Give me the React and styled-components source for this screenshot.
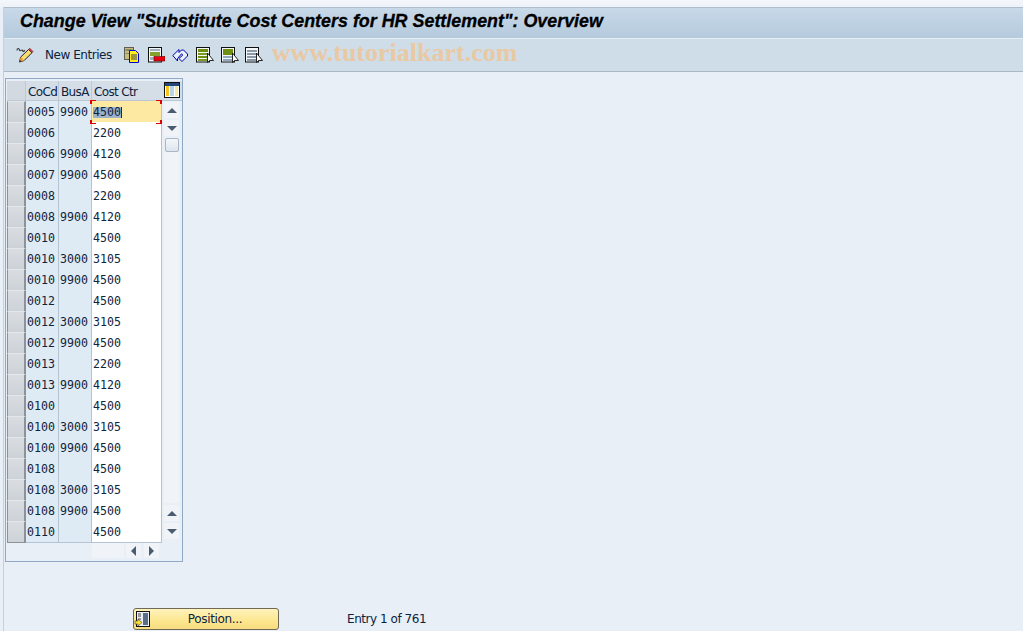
import React from "react";
import styled, { createGlobalStyle } from "styled-components";

const Global = createGlobalStyle`
  html, body { margin: 0; padding: 0; background: #e9eff7; }
  #root { width: 1023px; height: 631px; overflow: hidden; }
`;

const Page = styled.div`
  width: 1023px;
  height: 631px;
  display: flex;
  flex-direction: column;
  box-sizing: border-box;
  padding-top: 7px;
  padding-left: 3px;
  background: linear-gradient(#f3f6fb 0, #eef3f9 7px, #e9eff7 8px);
  font-family: "DejaVu Sans", sans-serif;
  overflow: hidden;
`;

const Shell = styled.div`
  flex: 1;
  display: flex;
  flex-direction: column;
  border-left: 1px solid #c5d0dc;
  min-height: 0;
`;

const TitleBar = styled.div`
  height: 31px;
  flex: none;
  box-sizing: border-box;
  border-top: 1px solid #aebccb;
  padding: 2px 0 0 16px;
  background: linear-gradient(#c8d9e8, #b4cadd);
  font: italic bold 17.9px/22px "Liberation Sans", Arial, sans-serif;
  -webkit-text-stroke: 0.3px #000;
  color: #000;
  white-space: nowrap;
`;

const Toolbar = styled.div`
  height: 34px;
  flex: none;
  box-sizing: border-box;
  display: flex;
  align-items: center;
  padding-left: 12px;
  border-top: 1px solid #e6edf4;
  border-bottom: 1px solid #a9b8c7;
  background: #cfdde9;
`;

const IconSlot = styled.span`
  display: inline-flex;
  width: ${(p) => p.$w || 16}px;
  height: 16px;
  margin-left: ${(p) => p.$ml || 0}px;
  flex: none;
`;

const ToolLabel = styled.span`
  font: 12px/16px "DejaVu Sans", sans-serif;
  letter-spacing: -0.45px;
  color: #0c2340;
  margin-left: 11px;
  margin-right: 12px;
`;

const Watermark = styled.span`
  font: bold 26px/26px "Liberation Serif", serif;
  color: #e9c9a3;
  margin-left: 9px;
  white-space: nowrap;
  position: relative;
  top: -2px;
`;

const Content = styled.div`
  flex: 1;
  display: flex;
  flex-direction: column;
  min-height: 0;
  padding: 6px 0 0 1px;
`;

const TableFrame = styled.div`
  width: 178px;
  height: 484px;
  flex: none;
  box-sizing: border-box;
  border: 1px solid #8fa9c4;
  padding: 2px 0 0 1px;
  display: grid;
  grid-template-columns: 155px 20px;
  grid-template-rows: 20px 441px 1fr;
`;

const Header = styled.div`
  grid-column: 1;
  display: grid;
  grid-template-columns: 19px 33px 33px 1fr;
  background: #d5dde6;
  border-bottom: 1px solid #bcc8d4;
  box-sizing: border-box;
`;

const HeaderCell = styled.div`
  font: 12px/22px "DejaVu Sans", sans-serif;
  letter-spacing: -0.65px;
  color: #0c2340;
  padding-left: 2px;
  border-right: ${(p) => (p.$last ? "none" : "1px solid #bcc8d4")};
  white-space: nowrap;
  overflow: hidden;
  background: ${(p) => (p.$corner ? "#d3d9e0" : "transparent")};
`;

const HeaderTool = styled.div`
  grid-column: 2;
  background: #d5dde6;
  border-bottom: 1px solid #bcc8d4;
  box-sizing: border-box;
  display: flex;
  justify-content: center;
  padding-top: 1px;
`;

const Rows = styled.div`
  grid-column: 1;
  display: flex;
  flex-direction: column;
`;

const Row = styled.div`
  display: grid;
  grid-template-columns: 19px 33px 33px 1fr;
  height: 21px;
`;

const Selector = styled.div`
  box-sizing: border-box;
  background: linear-gradient(#d9dde2, #cdd2d8);
  border-top: 1px solid #e4e7ea;
  border-left: 1px solid #8d9298;
  border-right: 2px solid #8d9298;
  border-bottom: 1px solid #8d9298;
`;

const Cell = styled.div`
  position: relative;
  box-sizing: border-box;
  font: 11.6px/20px "DejaVu Sans Mono", monospace;
  color: #10243c;
  padding: 1px 0 0 1px;
  white-space: nowrap;
  border-right: 1px solid #b5c4d3;
  border-bottom: 1px solid #b5c4d3;
  background: ${(p) => (p.$focus ? "#fde9a1" : p.$input ? "#ffffff" : "#deeaf4")};
`;

const Selected = styled.span`
  display: inline-block;
  line-height: 10px;
  height: 11px;
  vertical-align: 0;
  background: #9db1c9;
  border-right: 1px solid #1a2a44;
`;

const Corner = styled.i`
  position: absolute;
  z-index: 1;
  width: 4px;
  height: 3px;
  border: 0 solid #e00000;
  ${(p) => (p.$top ? "top: -1px; border-top-width: 1px;" : "bottom: -2px; border-bottom-width: 1px;")}
  ${(p) => (p.$left ? "left: -2px; border-left-width: 2px;" : "right: -1px; border-right-width: 2px;")}
`;

const VScroll = styled.div`
  grid-column: 2;
  display: flex;
  flex-direction: column;
  background: #e8eff7;
  padding: 1px 3px 0 2px;
`;

const ScrollBtn = styled.div`
  width: 15px;
  height: 16px;
  flex: none;
  margin-bottom: ${(p) => p.$mb || 0}px;
  margin-top: ${(p) => p.$mt || 0}px;
  background: #f0f4f9;
  display: flex;
  align-items: center;
  justify-content: center;
`;

const Thumb = styled.div`
  width: 14px;
  height: 14px;
  flex: none;
  box-sizing: border-box;
  border: 1px solid #aab6c3;
  border-radius: 2px;
  background: linear-gradient(#f4f7fa, #dbe4ee);
  margin: 2px 0 0 1px;
`;

const Track = styled.div`
  flex: 1;
  background: #f0f4f9;
`;

const HScroll = styled.div`
  grid-column: 1;
  display: flex;
  padding: 1px 0 0 85px;
`;

const HBlank = styled.div`
  width: 33px;
  height: 15px;
  margin-right: 2px;
  background: #f0f4f9;
`;

const HBtn = styled.div`
  width: 15px;
  height: 15px;
  margin-right: 3px;
  background: #f0f4f9;
  display: flex;
  align-items: center;
  justify-content: center;
`;

const Footer = styled.div`
  margin-top: auto;
  height: 69px;
  flex: none;
  display: flex;
  align-items: flex-start;
  padding: 46px 0 0 128px;
  box-sizing: border-box;
`;

const PosButton = styled.button`
  width: 146px;
  height: 22px;
  box-sizing: border-box;
  padding: 0;
  display: flex;
  align-items: center;
  border: 1px solid #6f6a55;
  border-radius: 3px;
  background: linear-gradient(#fff3bd, #fde68f 60%, #f6dc80);
  font: 12px/18px "DejaVu Sans", sans-serif;
  letter-spacing: -0.35px;
  color: #0c2340;
`;

const PosLabel = styled.span`
  flex: 1;
  text-align: center;
  padding-left: 2px;
`;

const Status = styled.span`
  font: 12px/18px "DejaVu Sans", sans-serif;
  letter-spacing: -0.45px;
  color: #0c2340;
  margin-left: 68px;
  margin-top: 2px;
`;

const Arrow = ({ dir }) => {
  const pts = {
    up: "0,7 10,7 5,2",
    down: "0,2 10,2 5,7",
    left: "7,0 7,10 2,5",
    right: "2,0 2,10 7,5",
  }[dir];
  const vertical = dir === "up" || dir === "down";
  return (
    <svg width={vertical ? 10 : 9} height={vertical ? 9 : 10} viewBox={vertical ? "0 0 10 9" : "0 0 9 10"}>
      <polygon points={pts} fill="#4a5c70" />
    </svg>
  );
};

const Wand = () => (
  <svg width="18" height="16" viewBox="0 0 18 16">
    <path d="M1 3.5C1 1 3 1 3.5 3S6 2 6.5 3.5 8 5 8.5 3" fill="none" stroke="#333" strokeWidth="1.1" />
    <path d="M3.5 15l1.2-5L12.5 2.5l3.5 3.2L8.2 13.5z" fill="#f8dc74" stroke="#222" strokeWidth="1" />
    <path d="M12.5 2.5l3.5 3.2 1-1.2-3.2-3.2z" fill="#e03c50" stroke="#522" strokeWidth="0.6" />
    <path d="M3.5 15l1.2-5 3.5 3.5z" fill="#f09a3e" />
    <path d="M3.5 15l.5-2 1.5 1.4z" fill="#222" />
  </svg>
);

const Copy = () => (
  <svg width="16" height="16" viewBox="0 0 16 16">
    <rect x="0.5" y="0.5" width="9" height="12" fill="#c8bd7a" stroke="#5f5f55" />
    <path d="M1.5 2h7v2h-7zM1.5 6h4v1h-4z" fill="#8a8a6a" />
    <path d="M5.5 3.5h6l3 3v9h-9z" fill="#ffee22" stroke="#0000d0" />
    <path d="M7 8h6M7 10h6M7 12h6" stroke="#3a3a50" strokeWidth="1" />
  </svg>
);

const Delete = () => (
  <svg width="17" height="16" viewBox="0 0 17 16">
    <rect x="0.5" y="0.5" width="13" height="14.5" fill="#f4f6f8" stroke="#111" />
    <rect x="2" y="2" width="10" height="2" fill="#9fb0c0" />
    <rect x="2" y="5" width="10" height="4" fill="#86a030" />
    <rect x="2" y="10" width="5" height="3" fill="#9fb0c0" />
    <rect x="6" y="9.5" width="11" height="4.5" fill="#e80010" stroke="#600" strokeWidth="0.6" />
  </svg>
);

const Undo = () => (
  <svg width="17" height="16" viewBox="0 0 17 16">
    <path d="M0.8 8.5L7 2.5v3l2.5-2.5h2l4 4v2l-5.5 5.5-3-3 3.8-3.5-1.3-1.2L5.5 11.5V14z" fill="#e8f0fb" stroke="#0000a8" strokeWidth="1" strokeLinejoin="round" />
  </svg>
);

const Sheet = ({ band }) => (
  <svg width="18" height="16" viewBox="0 0 18 16">
    <rect x="0.5" y="0.5" width="13" height="14.5" fill="#f4f6f8" stroke="#111" />
    {band === "top" && (
      <>
        <rect x="2" y="2" width="10" height="3" fill="#6f8f10" />
        <rect x="2" y="6" width="10" height="2" fill="#7a9a20" />
        <rect x="2" y="9" width="10" height="2" fill="#6f8f10" />
        <rect x="2" y="12" width="10" height="2" fill="#7a9a20" />
      </>
    )}
    {band === "mid" && (
      <>
        <rect x="2" y="2" width="10" height="6" fill="#6f8f10" />
        <rect x="2" y="9" width="10" height="2" fill="#8fa8c0" />
        <rect x="2" y="12" width="10" height="2" fill="#8fa8c0" />
      </>
    )}
    {band === "none" && (
      <>
        <rect x="2" y="3" width="10" height="2" fill="#8a9aab" />
        <rect x="2" y="6" width="10" height="2" fill="#8a9aab" />
        <rect x="2" y="9" width="10" height="2" fill="#8a9aab" />
        <rect x="2" y="12" width="10" height="2" fill="#8a9aab" />
      </>
    )}
    <path d="M11.5 6v9.5l2.2-2h3.8z" fill="#fff" stroke="#111" strokeWidth="0.9" />
  </svg>
);

const ColumnsIcon = () => (
  <svg width="16" height="16" viewBox="0 0 16 16">
    <rect x="0.5" y="0.5" width="15" height="15" fill="#fff" stroke="#111" />
    <rect x="1" y="1" width="14" height="3" fill="#24477a" />
    <rect x="2" y="4" width="3" height="10" fill="#f5c51e" />
    <rect x="6" y="4" width="4" height="10" fill="#b8d2ea" />
    <rect x="11" y="4" width="3" height="10" fill="#f5e9a0" />
  </svg>
);

const PosIcon = () => (
  <svg width="16" height="18" viewBox="0 0 16 18">
    <rect x="2.5" y="1.5" width="13" height="15" fill="#e8eef4" stroke="#111" />
    <rect x="9" y="3" width="5" height="12" fill="#5a6c86" />
    <path d="M4 4h3M4 6h3M4 9h3" stroke="#445" />
    <path d="M1 11h3V9l4 3.5L4 16v-2H1z" fill="#ffe030" stroke="#555" strokeWidth="0.7" />
  </svg>
);

const data = [
  ["0005", "9900", "4500"], ["0006", "", "2200"], ["0006", "9900", "4120"],
  ["0007", "9900", "4500"], ["0008", "", "2200"], ["0008", "9900", "4120"],
  ["0010", "", "4500"], ["0010", "3000", "3105"], ["0010", "9900", "4500"],
  ["0012", "", "4500"], ["0012", "3000", "3105"], ["0012", "9900", "4500"],
  ["0013", "", "2200"], ["0013", "9900", "4120"], ["0100", "", "4500"],
  ["0100", "3000", "3105"], ["0100", "9900", "4500"], ["0108", "", "4500"],
  ["0108", "3000", "3105"], ["0108", "9900", "4500"], ["0110", "", "4500"],
];

export default function App() {
  return (
    <>
      <Global />
      <Page>
        <Shell>
          <TitleBar>Change View "Substitute Cost Centers for HR Settlement": Overview</TitleBar>
          <Toolbar>
            <IconSlot $w={18}><Wand /></IconSlot>
            <ToolLabel>New Entries</ToolLabel>
            <IconSlot><Copy /></IconSlot>
            <IconSlot $w={17} $ml={8}><Delete /></IconSlot>
            <IconSlot $w={17} $ml={7}><Undo /></IconSlot>
            <IconSlot $w={18} $ml={7}><Sheet band="top" /></IconSlot>
            <IconSlot $w={18} $ml={7}><Sheet band="mid" /></IconSlot>
            <IconSlot $w={18} $ml={6}><Sheet band="none" /></IconSlot>
            <Watermark>www.tutorialkart.com</Watermark>
          </Toolbar>
          <Content>
            <TableFrame>
              <Header>
                <HeaderCell $corner />
                <HeaderCell>CoCd</HeaderCell>
                <HeaderCell>BusA</HeaderCell>
                <HeaderCell $last>Cost Ctr</HeaderCell>
              </Header>
              <HeaderTool><ColumnsIcon /></HeaderTool>
              <Rows>
                {data.map((r, i) => (
                  <Row key={i}>
                    <Selector />
                    <Cell>{r[0]}</Cell>
                    <Cell>{r[1]}</Cell>
                    <Cell $input $focus={i === 0}>
                      {i === 0 ? <Selected>{r[2]}</Selected> : r[2]}
                      {i === 0 && (
                        <>
                          <Corner $top $left />
                          <Corner $top />
                          <Corner $left />
                          <Corner />
                        </>
                      )}
                    </Cell>
                  </Row>
                ))}
              </Rows>
              <VScroll>
                <ScrollBtn $mb={2}><Arrow dir="up" /></ScrollBtn>
                <ScrollBtn><Arrow dir="down" /></ScrollBtn>
                <Thumb />
                <Track />
                <ScrollBtn $mt={2} $mb={2}><Arrow dir="up" /></ScrollBtn>
                <ScrollBtn $mb={3}><Arrow dir="down" /></ScrollBtn>
              </VScroll>
              <HScroll>
                <HBlank />
                <HBtn><Arrow dir="left" /></HBtn>
                <HBtn><Arrow dir="right" /></HBtn>
              </HScroll>
            </TableFrame>
            <Footer>
              <PosButton><PosIcon /><PosLabel>Position...</PosLabel></PosButton>
              <Status>Entry 1 of 761</Status>
            </Footer>
          </Content>
        </Shell>
      </Page>
    </>
  );
}
